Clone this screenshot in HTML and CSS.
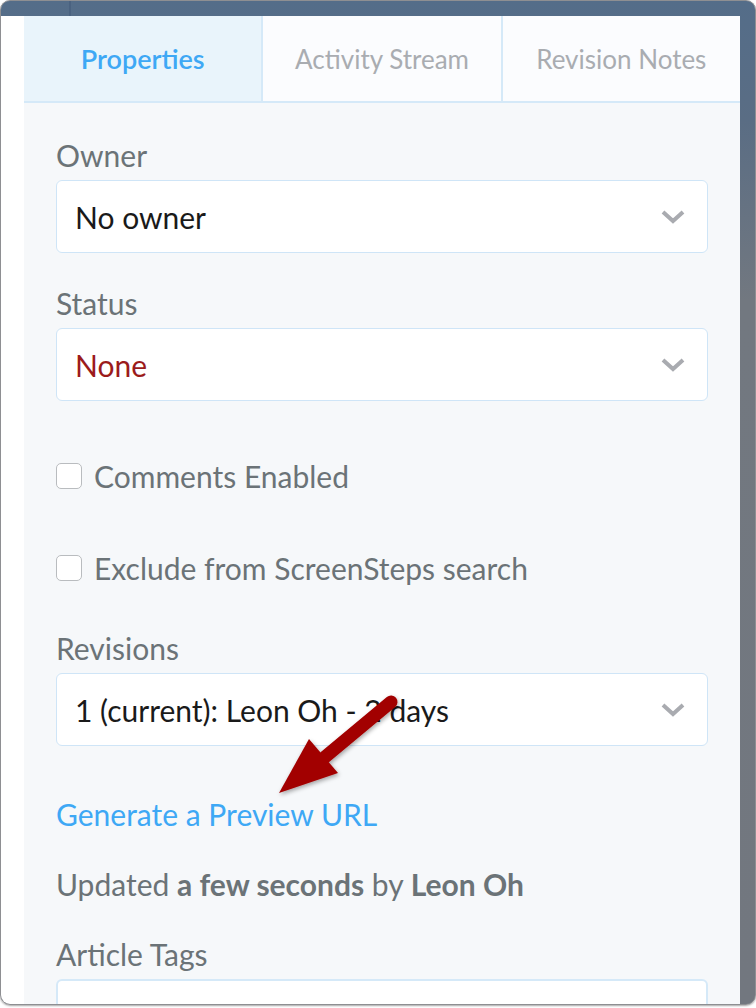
FILE: index.html
```html
<!DOCTYPE html>
<html>
<head>
<meta charset="utf-8">
<link rel="stylesheet" href="styles.css">
</head>
<body>
<div class="window">
  <div class="titlebar"><span class="titlebar-line"></span></div>
  <div class="frame">
    <div class="left-strip"></div>
    <div class="panel">
      <div class="tabs">
        <div class="tab active">Properties</div>
        <div class="tab">Activity Stream</div>
        <div class="tab">Revision Notes</div>
      </div>
      <div class="content">
        <div class="field">
          <div class="label">Owner</div>
          <div class="select"><span>No owner</span><svg class="chev" viewBox="0 0 24 14" width="24" height="14"><path d="M2 2 L12 11 L22 2" fill="none" stroke="#a9abb0" stroke-width="4"/></svg></div>
        </div>
        <div class="field">
          <div class="label">Status</div>
          <div class="select"><span class="red">None</span><svg class="chev" viewBox="0 0 24 14" width="24" height="14"><path d="M2 2 L12 11 L22 2" fill="none" stroke="#a9abb0" stroke-width="4"/></svg></div>
        </div>
        <label class="check first"><span class="box"></span>Comments Enabled</label>
        <label class="check"><span class="box"></span>Exclude from ScreenSteps search</label>
        <div class="field revisions">
          <div class="label">Revisions</div>
          <div class="select"><span>1 (current): Leon Oh - 2 days</span><svg class="chev" viewBox="0 0 24 14" width="24" height="14"><path d="M2 2 L12 11 L22 2" fill="none" stroke="#a9abb0" stroke-width="4"/></svg></div>
        </div>
        <a class="link">Generate a Preview URL</a>
        <div class="updated">Updated <b>a few seconds</b> by <b>Leon Oh</b></div>
        <div class="field tags">
          <div class="label">Article Tags</div>
          <div class="input"></div>
        </div>
      </div>
    </div>
    <div class="right-strip"></div>
  </div>
  <svg class="arrow" width="150" height="130" viewBox="0 0 150 130">
    <defs>
      <filter id="sh" x="-20%" y="-20%" width="140%" height="140%">
        <feDropShadow dx="1" dy="2" stdDeviation="2" flood-color="#000" flood-opacity="0.35"/>
      </filter>
    </defs>
    <g filter="url(#sh)">
      <line x1="124" y1="21" x2="58" y2="76" stroke="#a20000" stroke-width="13" stroke-linecap="round"/>
      <polygon points="42,58 71,92 12,112" fill="#a20000"/>
    </g>
  </svg>
</div>
</body>
</html>
```
FILE: styles.css
```css
html, body {
  margin: 0;
  padding: 0;
  background: #ffffff;
}
body {
  font-family: "Lato", "Liberation Sans", sans-serif;
  width: 756px;
  height: 1008px;
  overflow: hidden;
}
.window {
  position: relative;
  width: 754px;
  height: 1003px;
  border: 1px solid #8e8f92;
  border-radius: 10px;
  overflow: hidden;
  display: flex;
  flex-direction: column;
  background: linear-gradient(#546d89 0px, #5a6d84 120px, #727880 300px, #72777f 100%);
  box-shadow: 0 1px 2px rgba(0,0,0,0.35);
}
.titlebar {
  height: 15px;
  flex: none;
  position: relative;
}
.titlebar-line {
  position: absolute;
  left: 68px;
  top: 0;
  width: 2px;
  height: 15px;
  background: #4a6280;
}
.frame {
  flex: 1;
  display: flex;
  min-height: 0;
}
.left-strip {
  width: 23px;
  background: #ffffff;
  flex: none;
}
.right-strip {
  width: 15px;
  flex: none;
}
.panel {
  width: 716px;
  background: #f6f8fa;
  display: flex;
  flex-direction: column;
}
.tabs {
  display: flex;
  height: 85px;
  border-bottom: 2px solid #d5e9f8;
  flex: none;
}
.tab {
  flex: 1;
  display: flex;
  align-items: center;
  justify-content: center;
  background: #fbfcfe;
  color: #a9acb1;
  font-size: 26px;
  border-left: 2px solid #d5e9f8;
}
.tab.active {
  background: #e9f4fb;
  color: #3ea8f5;
  font-weight: 600;
  font-size: 27px;
  border-left: none;
}
.content {
  padding: 34px 32px 0 32px;
  color: #6b7377;
  font-size: 30px;
}
.label {
  height: 36px;
  line-height: 36px;
  margin-bottom: 7px;
}
.field + .field {
  margin-top: 32px;
}
.select {
  height: 71px;
  border: 1px solid #cfe5f7;
  border-radius: 6px;
  background: #ffffff;
  display: flex;
  align-items: center;
  justify-content: space-between;
  padding: 0 22px 0 18px;
  color: #1a1a1a;
}
.red { color: #9b1b1b; }
.check {
  display: flex;
  align-items: center;
  gap: 12px;
  height: 36px;
}
.check.first { margin-top: 57px; }
.check + .check { margin-top: 56px; }
.box {
  width: 26px;
  height: 26px;
  box-sizing: border-box;
  border: 1px solid #b9bcbf;
  border-radius: 5px;
  background: #ffffff;
}
.field.revisions { margin-top: 44px; }
.link {
  display: block;
  color: #3ea8f5;
  margin-top: 50px;
  height: 36px;
  line-height: 36px;
}
.updated {
  margin-top: 34px;
  height: 36px;
  line-height: 36px;
}
.updated b { font-weight: 700; }
.field.tags { margin-top: 34px; }
.input {
  height: 71px;
  border: 2px solid #d5e9f8;
  border-radius: 6px;
  background: #ffffff;
}
.arrow {
  position: absolute;
  left: 266px;
  top: 680px;
}
```
